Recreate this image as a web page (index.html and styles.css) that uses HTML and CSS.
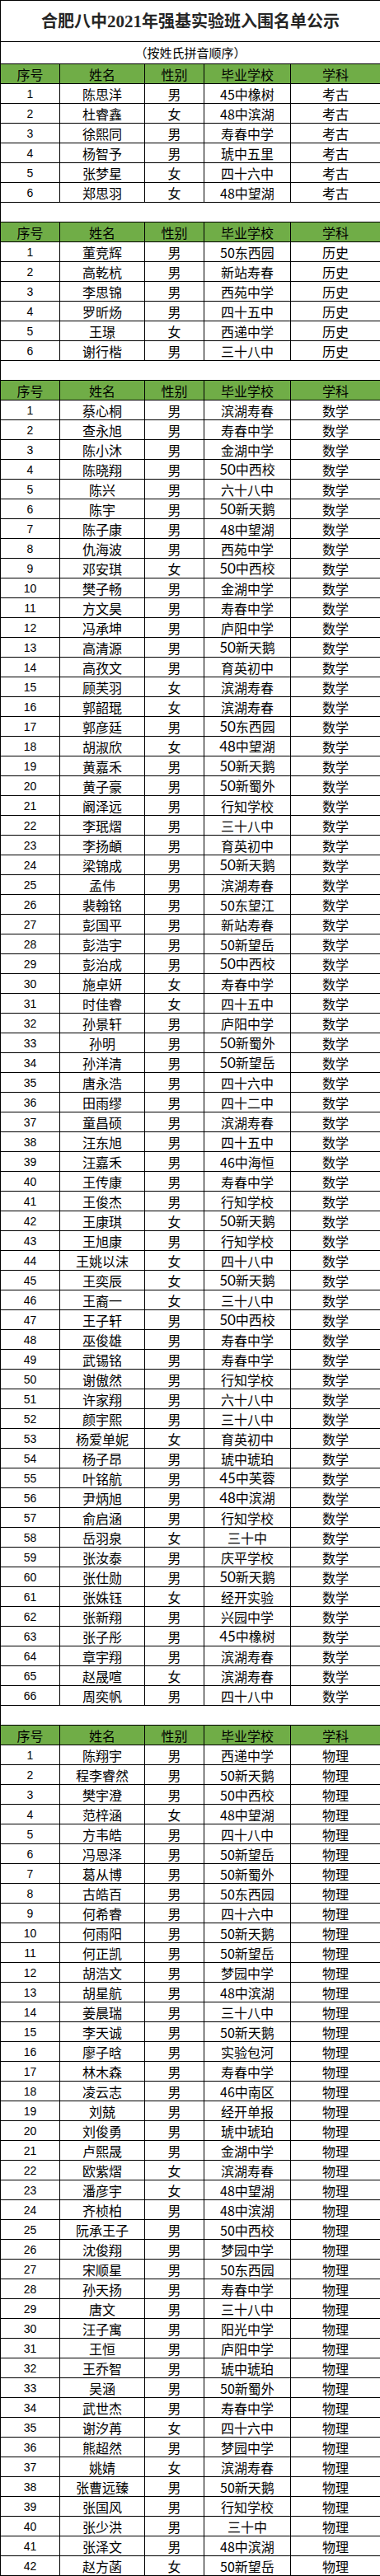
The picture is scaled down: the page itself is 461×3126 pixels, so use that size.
FILE: index.html
```html
<!DOCTYPE html>
<html lang="zh-CN">
<head>
<meta charset="utf-8">
<title>合肥八中2021年强基实验班入围名单公示</title>
<link rel="stylesheet" href="styles.css">
</head>
<body>
<table class="sheet">
<colgroup><col class="c1"><col class="c2"><col class="c3"><col class="c4"><col class="c5"></colgroup>
<tbody>
<tr class="title-row"><td colspan="5" class="title">合肥八中<span class="num">2021</span>年强基实验班入围名单公示</td></tr>
<tr class="sub-row"><td colspan="5" class="sub">（按姓氏拼音顺序）</td></tr>

<tr class="head"><td>序号</td><td>姓名</td><td>性别</td><td>毕业学校</td><td>学科</td></tr>
<tr><td class="idx">1</td><td>陈思洋</td><td>男</td><td>45中橡树</td><td>考古</td></tr>
<tr><td class="idx">2</td><td>杜睿鑫</td><td>女</td><td>48中滨湖</td><td>考古</td></tr>
<tr><td class="idx">3</td><td>徐熙同</td><td>男</td><td>寿春中学</td><td>考古</td></tr>
<tr><td class="idx">4</td><td>杨智予</td><td>男</td><td>琥中五里</td><td>考古</td></tr>
<tr><td class="idx">5</td><td>张梦星</td><td>女</td><td>四十六中</td><td>考古</td></tr>
<tr><td class="idx">6</td><td>郑思羽</td><td>女</td><td>48中望湖</td><td>考古</td></tr>
<tr class="gap"><td colspan="5"></td></tr>

<tr class="head"><td>序号</td><td>姓名</td><td>性别</td><td>毕业学校</td><td>学科</td></tr>
<tr><td class="idx">1</td><td>董竞辉</td><td>男</td><td>50东西园</td><td>历史</td></tr>
<tr><td class="idx">2</td><td>高乾杭</td><td>男</td><td>新站寿春</td><td>历史</td></tr>
<tr><td class="idx">3</td><td>李思锦</td><td>男</td><td>西苑中学</td><td>历史</td></tr>
<tr><td class="idx">4</td><td>罗昕炀</td><td>男</td><td>四十五中</td><td>历史</td></tr>
<tr><td class="idx">5</td><td>王璟</td><td>女</td><td>西递中学</td><td>历史</td></tr>
<tr><td class="idx">6</td><td>谢行楷</td><td>男</td><td>三十八中</td><td>历史</td></tr>
<tr class="gap"><td colspan="5"></td></tr>

<tr class="head"><td>序号</td><td>姓名</td><td>性别</td><td>毕业学校</td><td>学科</td></tr>
<tr><td class="idx">1</td><td>蔡心桐</td><td>男</td><td>滨湖寿春</td><td>数学</td></tr>
<tr><td class="idx">2</td><td>查永旭</td><td>男</td><td>寿春中学</td><td>数学</td></tr>
<tr><td class="idx">3</td><td>陈小沐</td><td>男</td><td>金湖中学</td><td>数学</td></tr>
<tr><td class="idx">4</td><td>陈晓翔</td><td>男</td><td><span class="cal">50</span>中西校</td><td>数学</td></tr>
<tr><td class="idx">5</td><td>陈兴</td><td>男</td><td>六十八中</td><td>数学</td></tr>
<tr><td class="idx">6</td><td>陈宇</td><td>男</td><td><span class="cal">50</span>新天鹅</td><td>数学</td></tr>
<tr><td class="idx">7</td><td>陈子康</td><td>男</td><td>48中望湖</td><td>数学</td></tr>
<tr><td class="idx">8</td><td>仇海波</td><td>男</td><td>西苑中学</td><td>数学</td></tr>
<tr><td class="idx">9</td><td>邓安琪</td><td>女</td><td><span class="cal">50</span>中西校</td><td>数学</td></tr>
<tr><td class="idx">10</td><td>樊子畅</td><td>男</td><td>金湖中学</td><td>数学</td></tr>
<tr><td class="idx">11</td><td>方文昊</td><td>男</td><td>寿春中学</td><td>数学</td></tr>
<tr><td class="idx">12</td><td>冯承坤</td><td>男</td><td>庐阳中学</td><td>数学</td></tr>
<tr><td class="idx">13</td><td>高清源</td><td>男</td><td><span class="cal">50</span>新天鹅</td><td>数学</td></tr>
<tr><td class="idx">14</td><td>高孜文</td><td>男</td><td>育英初中</td><td>数学</td></tr>
<tr><td class="idx">15</td><td>顾芙羽</td><td>女</td><td>滨湖寿春</td><td>数学</td></tr>
<tr><td class="idx">16</td><td>郭韶琨</td><td>女</td><td>滨湖寿春</td><td>数学</td></tr>
<tr><td class="idx">17</td><td>郭彦廷</td><td>男</td><td><span class="cal">50</span>东西园</td><td>数学</td></tr>
<tr><td class="idx">18</td><td>胡淑欣</td><td>女</td><td><span class="cal">48</span>中望湖</td><td>数学</td></tr>
<tr><td class="idx">19</td><td>黄嘉禾</td><td>男</td><td><span class="cal">50</span>新天鹅</td><td>数学</td></tr>
<tr><td class="idx">20</td><td>黄子豪</td><td>男</td><td><span class="cal">50</span>新蜀外</td><td>数学</td></tr>
<tr><td class="idx">21</td><td>阚泽远</td><td>男</td><td>行知学校</td><td>数学</td></tr>
<tr><td class="idx">22</td><td>李珉熠</td><td>男</td><td>三十八中</td><td>数学</td></tr>
<tr><td class="idx">23</td><td>李扬頔</td><td>男</td><td>育英初中</td><td>数学</td></tr>
<tr><td class="idx">24</td><td>梁锦成</td><td>男</td><td><span class="cal">50</span>新天鹅</td><td>数学</td></tr>
<tr><td class="idx">25</td><td>孟伟</td><td>男</td><td>滨湖寿春</td><td>数学</td></tr>
<tr><td class="idx">26</td><td>裴翰铭</td><td>男</td><td>50东望江</td><td>数学</td></tr>
<tr><td class="idx">27</td><td>彭国平</td><td>男</td><td>新站寿春</td><td>数学</td></tr>
<tr><td class="idx">28</td><td>彭浩宇</td><td>男</td><td>50新望岳</td><td>数学</td></tr>
<tr><td class="idx">29</td><td>彭治成</td><td>男</td><td><span class="cal">50</span>中西校</td><td>数学</td></tr>
<tr><td class="idx">30</td><td>施卓妍</td><td>女</td><td>寿春中学</td><td>数学</td></tr>
<tr><td class="idx">31</td><td>时佳睿</td><td>女</td><td>四十五中</td><td>数学</td></tr>
<tr><td class="idx">32</td><td>孙景轩</td><td>男</td><td>庐阳中学</td><td>数学</td></tr>
<tr><td class="idx">33</td><td>孙明</td><td>男</td><td><span class="cal">50</span>新蜀外</td><td>数学</td></tr>
<tr><td class="idx">34</td><td>孙洋清</td><td>男</td><td><span class="cal">50</span>新望岳</td><td>数学</td></tr>
<tr><td class="idx">35</td><td>唐永浩</td><td>男</td><td>四十六中</td><td>数学</td></tr>
<tr><td class="idx">36</td><td>田雨缪</td><td>男</td><td>四十二中</td><td>数学</td></tr>
<tr><td class="idx">37</td><td>童昌硕</td><td>男</td><td>滨湖寿春</td><td>数学</td></tr>
<tr><td class="idx">38</td><td>汪东旭</td><td>男</td><td>四十五中</td><td>数学</td></tr>
<tr><td class="idx">39</td><td>汪嘉禾</td><td>男</td><td>46中海恒</td><td>数学</td></tr>
<tr><td class="idx">40</td><td>王传康</td><td>男</td><td>寿春中学</td><td>数学</td></tr>
<tr><td class="idx">41</td><td>王俊杰</td><td>男</td><td>行知学校</td><td>数学</td></tr>
<tr><td class="idx">42</td><td>王康琪</td><td>女</td><td><span class="cal">50</span>新天鹅</td><td>数学</td></tr>
<tr><td class="idx">43</td><td>王旭康</td><td>男</td><td>行知学校</td><td>数学</td></tr>
<tr><td class="idx">44</td><td>王姚以沫</td><td>女</td><td>四十八中</td><td>数学</td></tr>
<tr><td class="idx">45</td><td>王奕辰</td><td>女</td><td><span class="cal">50</span>新天鹅</td><td>数学</td></tr>
<tr><td class="idx">46</td><td>王裔一</td><td>女</td><td>三十八中</td><td>数学</td></tr>
<tr><td class="idx">47</td><td>王子轩</td><td>男</td><td><span class="cal">50</span>中西校</td><td>数学</td></tr>
<tr><td class="idx">48</td><td>巫俊雄</td><td>男</td><td>寿春中学</td><td>数学</td></tr>
<tr><td class="idx">49</td><td>武锡铭</td><td>男</td><td>寿春中学</td><td>数学</td></tr>
<tr><td class="idx">50</td><td>谢傲然</td><td>男</td><td>行知学校</td><td>数学</td></tr>
<tr><td class="idx">51</td><td>许家翔</td><td>男</td><td>六十八中</td><td>数学</td></tr>
<tr><td class="idx">52</td><td>颜宇熙</td><td>男</td><td>三十八中</td><td>数学</td></tr>
<tr><td class="idx">53</td><td>杨爱单妮</td><td>女</td><td>育英初中</td><td>数学</td></tr>
<tr><td class="idx">54</td><td>杨子昂</td><td>男</td><td>琥中琥珀</td><td>数学</td></tr>
<tr><td class="idx">55</td><td>叶铭航</td><td>男</td><td><span class="cal">45</span>中芙蓉</td><td>数学</td></tr>
<tr><td class="idx">56</td><td>尹炳旭</td><td>男</td><td><span class="cal">48</span>中滨湖</td><td>数学</td></tr>
<tr><td class="idx">57</td><td>俞启涵</td><td>男</td><td>行知学校</td><td>数学</td></tr>
<tr><td class="idx">58</td><td>岳羽泉</td><td>女</td><td>三十中</td><td>数学</td></tr>
<tr><td class="idx">59</td><td>张汝泰</td><td>男</td><td>庆平学校</td><td>数学</td></tr>
<tr><td class="idx">60</td><td>张仕勋</td><td>男</td><td><span class="cal">50</span>新天鹅</td><td>数学</td></tr>
<tr><td class="idx">61</td><td>张姝钰</td><td>女</td><td>经开实验</td><td>数学</td></tr>
<tr><td class="idx">62</td><td>张新翔</td><td>男</td><td>兴园中学</td><td>数学</td></tr>
<tr><td class="idx">63</td><td>张子彤</td><td>男</td><td><span class="cal">45</span>中橡树</td><td>数学</td></tr>
<tr><td class="idx">64</td><td>章宇翔</td><td>男</td><td>滨湖寿春</td><td>数学</td></tr>
<tr><td class="idx">65</td><td>赵晟喧</td><td>女</td><td>滨湖寿春</td><td>数学</td></tr>
<tr><td class="idx">66</td><td>周奕帆</td><td>男</td><td>四十八中</td><td>数学</td></tr>
<tr class="gap"><td colspan="5"></td></tr>

<tr class="head"><td>序号</td><td>姓名</td><td>性别</td><td>毕业学校</td><td>学科</td></tr>
<tr><td class="idx">1</td><td>陈翔宇</td><td>男</td><td>西递中学</td><td>物理</td></tr>
<tr><td class="idx">2</td><td>程李睿然</td><td>男</td><td>50新天鹅</td><td>物理</td></tr>
<tr><td class="idx">3</td><td>樊宇澄</td><td>男</td><td>50中西校</td><td>物理</td></tr>
<tr><td class="idx">4</td><td>范梓涵</td><td>女</td><td>48中望湖</td><td>物理</td></tr>
<tr><td class="idx">5</td><td>方韦皓</td><td>男</td><td>四十八中</td><td>物理</td></tr>
<tr><td class="idx">6</td><td>冯恩泽</td><td>男</td><td>50新望岳</td><td>物理</td></tr>
<tr><td class="idx">7</td><td>葛从博</td><td>男</td><td>50新蜀外</td><td>物理</td></tr>
<tr><td class="idx">8</td><td>古皓百</td><td>男</td><td>50东西园</td><td>物理</td></tr>
<tr><td class="idx">9</td><td>何希睿</td><td>男</td><td>四十六中</td><td>物理</td></tr>
<tr><td class="idx">10</td><td>何雨阳</td><td>男</td><td>50新天鹅</td><td>物理</td></tr>
<tr><td class="idx">11</td><td>何正凯</td><td>男</td><td>50新望岳</td><td>物理</td></tr>
<tr><td class="idx">12</td><td>胡浩文</td><td>男</td><td>梦园中学</td><td>物理</td></tr>
<tr><td class="idx">13</td><td>胡星航</td><td>男</td><td>48中滨湖</td><td>物理</td></tr>
<tr><td class="idx">14</td><td>姜晨瑞</td><td>男</td><td>三十八中</td><td>物理</td></tr>
<tr><td class="idx">15</td><td>李天诚</td><td>男</td><td>50新天鹅</td><td>物理</td></tr>
<tr><td class="idx">16</td><td>廖子晗</td><td>男</td><td>实验包河</td><td>物理</td></tr>
<tr><td class="idx">17</td><td>林木森</td><td>男</td><td>寿春中学</td><td>物理</td></tr>
<tr><td class="idx">18</td><td>凌云志</td><td>男</td><td>46中南区</td><td>物理</td></tr>
<tr><td class="idx">19</td><td>刘兢</td><td>男</td><td>经开单报</td><td>物理</td></tr>
<tr><td class="idx">20</td><td>刘俊勇</td><td>男</td><td>琥中琥珀</td><td>物理</td></tr>
<tr><td class="idx">21</td><td>卢熙晟</td><td>男</td><td>金湖中学</td><td>物理</td></tr>
<tr><td class="idx">22</td><td>欧紫熠</td><td>女</td><td>滨湖寿春</td><td>物理</td></tr>
<tr><td class="idx">23</td><td>潘彦宇</td><td>女</td><td>48中望湖</td><td>物理</td></tr>
<tr><td class="idx">24</td><td>齐桢柏</td><td>男</td><td>48中滨湖</td><td>物理</td></tr>
<tr><td class="idx">25</td><td>阮承王子</td><td>男</td><td>50中西校</td><td>物理</td></tr>
<tr><td class="idx">26</td><td>沈俊翔</td><td>男</td><td>梦园中学</td><td>物理</td></tr>
<tr><td class="idx">27</td><td>宋顺星</td><td>男</td><td>50东西园</td><td>物理</td></tr>
<tr><td class="idx">28</td><td>孙天扬</td><td>男</td><td>寿春中学</td><td>物理</td></tr>
<tr><td class="idx">29</td><td>唐文</td><td>男</td><td>三十八中</td><td>物理</td></tr>
<tr><td class="idx">30</td><td>汪子寓</td><td>男</td><td>阳光中学</td><td>物理</td></tr>
<tr><td class="idx">31</td><td>王恒</td><td>男</td><td>庐阳中学</td><td>物理</td></tr>
<tr><td class="idx">32</td><td>王乔智</td><td>男</td><td>琥中琥珀</td><td>物理</td></tr>
<tr><td class="idx">33</td><td>吴涵</td><td>男</td><td>50新蜀外</td><td>物理</td></tr>
<tr><td class="idx">34</td><td>武世杰</td><td>男</td><td>寿春中学</td><td>物理</td></tr>
<tr><td class="idx">35</td><td>谢汐苒</td><td>女</td><td>四十六中</td><td>物理</td></tr>
<tr><td class="idx">36</td><td>熊超然</td><td>男</td><td>梦园中学</td><td>物理</td></tr>
<tr><td class="idx">37</td><td>姚婧</td><td>女</td><td>滨湖寿春</td><td>物理</td></tr>
<tr><td class="idx">38</td><td>张曹远臻</td><td>男</td><td>50新天鹅</td><td>物理</td></tr>
<tr><td class="idx">39</td><td>张国风</td><td>男</td><td>行知学校</td><td>物理</td></tr>
<tr><td class="idx">40</td><td>张少洪</td><td>男</td><td>三十中</td><td>物理</td></tr>
<tr><td class="idx">41</td><td>张泽文</td><td>男</td><td>48中滨湖</td><td>物理</td></tr>
<tr><td class="idx">42</td><td>赵方菡</td><td>女</td><td>50新望岳</td><td>物理</td></tr>
</tbody>
</table>
</body>
</html>
```

FILE: styles.css
```css
html, body {
  margin: 0;
  padding: 0;
  background: #ffffff;
}

.sheet {
  border-collapse: collapse;
  table-layout: fixed;
  width: 461px;
  font-family: "Noto Sans CJK SC", "Liberation Sans", sans-serif;
  font-size: 16px;
  line-height: 20px;
  color: #000000;
}

.c1 { width: 72px; }
.c2 { width: 103px; }
.c3 { width: 72px; }
.c4 { width: 105px; }
.c5 { width: 109px; }

.sheet td {
  border: 1px solid #000000;
  padding: 0;
  text-align: center;
  vertical-align: middle;
  white-space: nowrap;
  overflow: hidden;
}

.sheet tr {
  height: 24px;
}

.title-row {
  height: 50px !important;
}

.sub-row {
  height: 27px !important;
}

.title {
  font-size: 20px;
  font-weight: 700;
  color: #262626;
  letter-spacing: 0;
}

.title .num {
  font-family: "Liberation Serif", "Noto Sans CJK SC", serif;
  font-weight: 700;
  font-size: 21px;
}

.sub {
  font-size: 15px;
}

.head td {
  background: #70ad47;
}

.idx {
  font-family: "Liberation Sans", "Noto Sans CJK SC", sans-serif;
  font-size: 14px;
}

.cal {
  font-family: "Lato", "Liberation Sans", sans-serif;
  font-size: 17px;
}
```
